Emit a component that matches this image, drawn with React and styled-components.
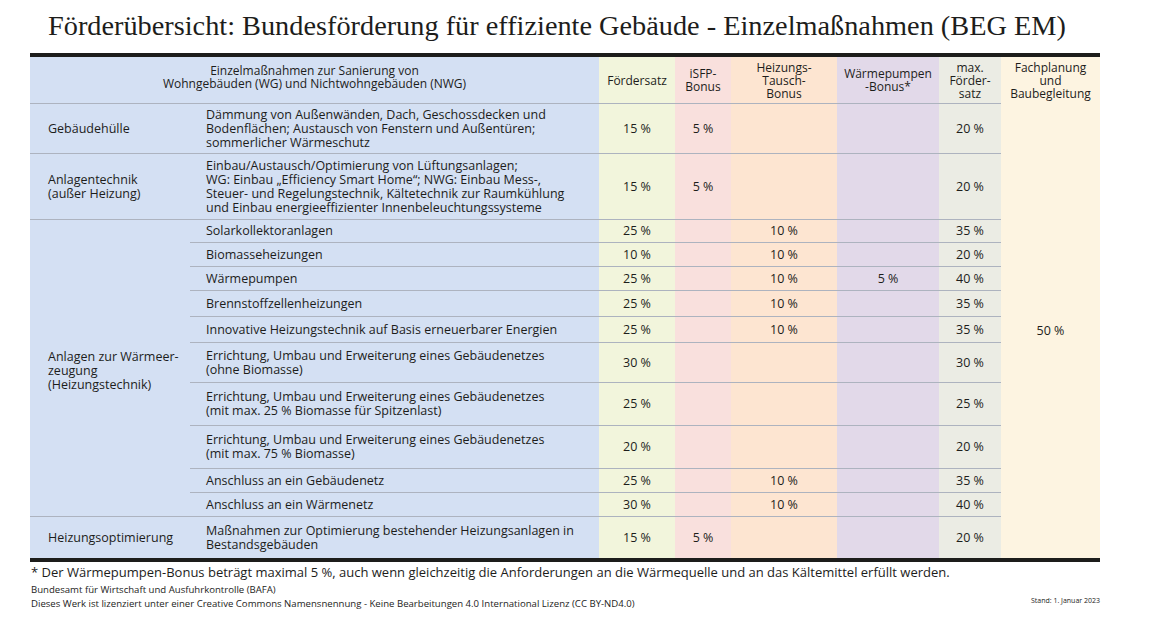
import React from 'react';
import styled, { createGlobalStyle } from 'styled-components';

const GlobalStyle = createGlobalStyle`
  html, body { margin: 0; padding: 0; background: #ffffff; }
  body { font-family: "Open Sans", "Noto Sans", sans-serif; color: #1d1d1b; }
`;

const COLORS = ['#d4e0f3', '#d4e0f3', '#f2f5dc', '#f9e0dd', '#fde5d1', '#e2d9e9', '#ebece4', '#fdf4e1'];
const LINE = '1px solid #adb3bf';

const Page = styled.div`
  width: 1164px;
  height: 634px;
  box-sizing: border-box;
  padding: 10px 0 0 30px;
  overflow: hidden;
`;

const Title = styled.h1`
  margin: 0 0 12px 18px;
  font-family: "Liberation Serif", "DejaVu Serif", serif;
  font-weight: 400;
  font-size: 28.3px;
  line-height: 31px;
  color: #1d1d1b;
  white-space: nowrap;
`;

const Table = styled.div`
  display: grid;
  width: 1070px;
  grid-template-columns: 160px 409px 76px 56px 106px 102px 62px 99px;
  grid-template-rows: 47px 50px 66px 23px 24px 24px 26px 26px 40px 43px 43px 24px 24px 41px;
  border-top: 4px solid #1d1d1b;
  border-bottom: 4px solid #1d1d1b;
`;

const BaseCell = styled.div`
  grid-column: ${p => p.$col} / span ${p => p.$cspan || 1};
  grid-row: ${p => p.$row} / span ${p => p.$rspan || 1};
  background: ${p => COLORS[p.$col - 1]};
  border-bottom: ${p => (p.$line ? LINE : 'none')};
  box-sizing: border-box;
  display: flex;
  white-space: nowrap;
  color: #1d1d1b;
  font-weight: 500;
`;

const HeadCell = styled(BaseCell)`
  align-items: center;
  justify-content: center;
  text-align: center;
  font-size: 12px;
  line-height: 13px;
  padding-bottom: ${p => p.$lift || 0}px;
`;

const CategoryCell = styled(BaseCell)`
  align-items: ${p => (p.$shift ? 'flex-start' : 'center')};
  padding: ${p => p.$shift || 0}px 0 0 18px;
  font-size: 12.5px;
  line-height: 14px;
`;

const DescCell = styled(BaseCell)`
  align-items: center;
  padding-left: 16px;
  font-size: 12.5px;
  line-height: 14px;
`;

const ValueCell = styled(BaseCell)`
  align-items: center;
  justify-content: center;
  font-size: 12.5px;
  line-height: 14px;
`;

const Footnote = styled.p`
  margin: 2px 0 0 1px;
  font-size: 13px;
  line-height: 16px;
  white-space: nowrap;
`;

const Footer = styled.div`
  width: 1070px;
  display: flex;
  justify-content: space-between;
  align-items: flex-end;
  margin-top: 3px;
`;

const Credits = styled.div`
  padding-left: 1px;
  font-size: 9.6px;
  line-height: 14px;
  white-space: nowrap;
`;

const Stand = styled.div`
  font-size: 7px;
  line-height: 10px;
  margin-bottom: 5px;
  white-space: nowrap;
`;

const Lines = ({ lines }) => (
  <span>
    {lines.map((l, i) => (
      <React.Fragment key={i}>
        {i > 0 && <br />}
        {l}
      </React.Fragment>
    ))}
  </span>
);

const headers = [
  ['Fördersatz'],
  ['iSFP-', 'Bonus'],
  ['Heizungs-', 'Tausch-', 'Bonus'],
  ['Wärmepumpen', '-Bonus*'],
  ['max.', 'Förder-', 'satz'],
  ['Fachplanung', 'und', 'Baubegleitung'],
];

const rows = [
  {
    cat: ['Gebäudehülle'],
    desc: ['Dämmung von Außenwänden, Dach, Geschossdecken und', 'Bodenflächen; Austausch von Fenstern und Außentüren;', 'sommerlicher Wärmeschutz'],
    v: ['15 %', '5 %', '', '', '20 %'],
  },
  {
    cat: ['Anlagentechnik', '(außer Heizung)'],
    desc: ['Einbau/Austausch/Optimierung von Lüftungsanlagen;', 'WG: Einbau „Efficiency Smart Home“; NWG: Einbau Mess-,', 'Steuer- und Regelungstechnik, Kältetechnik zur Raumkühlung', 'und Einbau energieeffizienter Innenbeleuchtungssysteme'],
    v: ['15 %', '5 %', '', '', '20 %'],
  },
  {
    cat: ['Anlagen zur Wärmeer-', 'zeugung', '(Heizungstechnik)'],
    span: 10,
    shift: 130,
    desc: ['Solarkollektoranlagen'],
    v: ['25 %', '', '10 %', '', '35 %'],
  },
  { desc: ['Biomasseheizungen'], v: ['10 %', '', '10 %', '', '20 %'] },
  { desc: ['Wärmepumpen'], v: ['25 %', '', '10 %', '5 %', '40 %'] },
  { desc: ['Brennstoffzellenheizungen'], v: ['25 %', '', '10 %', '', '35 %'] },
  { desc: ['Innovative Heizungstechnik auf Basis erneuerbarer Energien'], v: ['25 %', '', '10 %', '', '35 %'] },
  { desc: ['Errichtung, Umbau und Erweiterung eines Gebäudenetzes', '(ohne Biomasse)'], v: ['30 %', '', '', '', '30 %'] },
  { desc: ['Errichtung, Umbau und Erweiterung eines Gebäudenetzes', '(mit max. 25 % Biomasse für Spitzenlast)'], v: ['25 %', '', '', '', '25 %'] },
  { desc: ['Errichtung, Umbau und Erweiterung eines Gebäudenetzes', '(mit max. 75 % Biomasse)'], v: ['20 %', '', '', '', '20 %'] },
  { desc: ['Anschluss an ein Gebäudenetz'], v: ['25 %', '', '10 %', '', '35 %'] },
  { desc: ['Anschluss an ein Wärmenetz'], v: ['30 %', '', '10 %', '', '40 %'] },
  {
    cat: ['Heizungsoptimierung'],
    desc: ['Maßnahmen zur Optimierung bestehender Heizungsanlagen in', 'Bestandsgebäuden'],
    v: ['15 %', '5 %', '', '', '20 %'],
  },
];

export default function App() {
  const last = rows.length + 1;
  return (
    <Page>
      <GlobalStyle />
      <Title>Förderübersicht: Bundesförderung für effiziente Gebäude - Einzelmaßnahmen (BEG EM)</Title>
      <Table>
        <HeadCell $col={1} $cspan={2} $row={1} $line $lift={6}>
          <Lines lines={['Einzelmaßnahmen zur Sanierung von', 'Wohngebäuden (WG) und Nichtwohngebäuden (NWG)']} />
        </HeadCell>
        {headers.map((h, i) => (
          <HeadCell key={i} $col={i + 3} $row={1} $line={i < 5}>
            <Lines lines={h} />
          </HeadCell>
        ))}
        {rows.map((r, i) => {
          const row = i + 2;
          const line = row !== last;
          return (
            <React.Fragment key={i}>
              {r.cat && (
                <CategoryCell $col={1} $row={row} $rspan={r.span || 1} $line={row + (r.span || 1) - 1 !== last} $shift={r.shift}>
                  <Lines lines={r.cat} />
                </CategoryCell>
              )}
              <DescCell $col={2} $row={row} $line={line}>
                <Lines lines={r.desc} />
              </DescCell>
              {r.v.map((val, j) => (
                <ValueCell key={j} $col={j + 3} $row={row} $line={line}>
                  {val}
                </ValueCell>
              ))}
            </React.Fragment>
          );
        })}
        <ValueCell $col={8} $row={2} $rspan={rows.length}>50 %</ValueCell>
      </Table>
      <Footnote>* Der Wärmepumpen-Bonus beträgt maximal 5 %, auch wenn gleichzeitig die Anforderungen an die Wärmequelle und an das Kältemittel erfüllt werden.</Footnote>
      <Footer>
        <Credits>
          Bundesamt für Wirtschaft und Ausfuhrkontrolle (BAFA)
          <br />
          Dieses Werk ist lizenziert unter einer Creative Commons Namensnennung - Keine Bearbeitungen 4.0 International Lizenz (CC BY-ND4.0)
        </Credits>
        <Stand>Stand: 1. Januar 2023</Stand>
      </Footer>
    </Page>
  );
}
